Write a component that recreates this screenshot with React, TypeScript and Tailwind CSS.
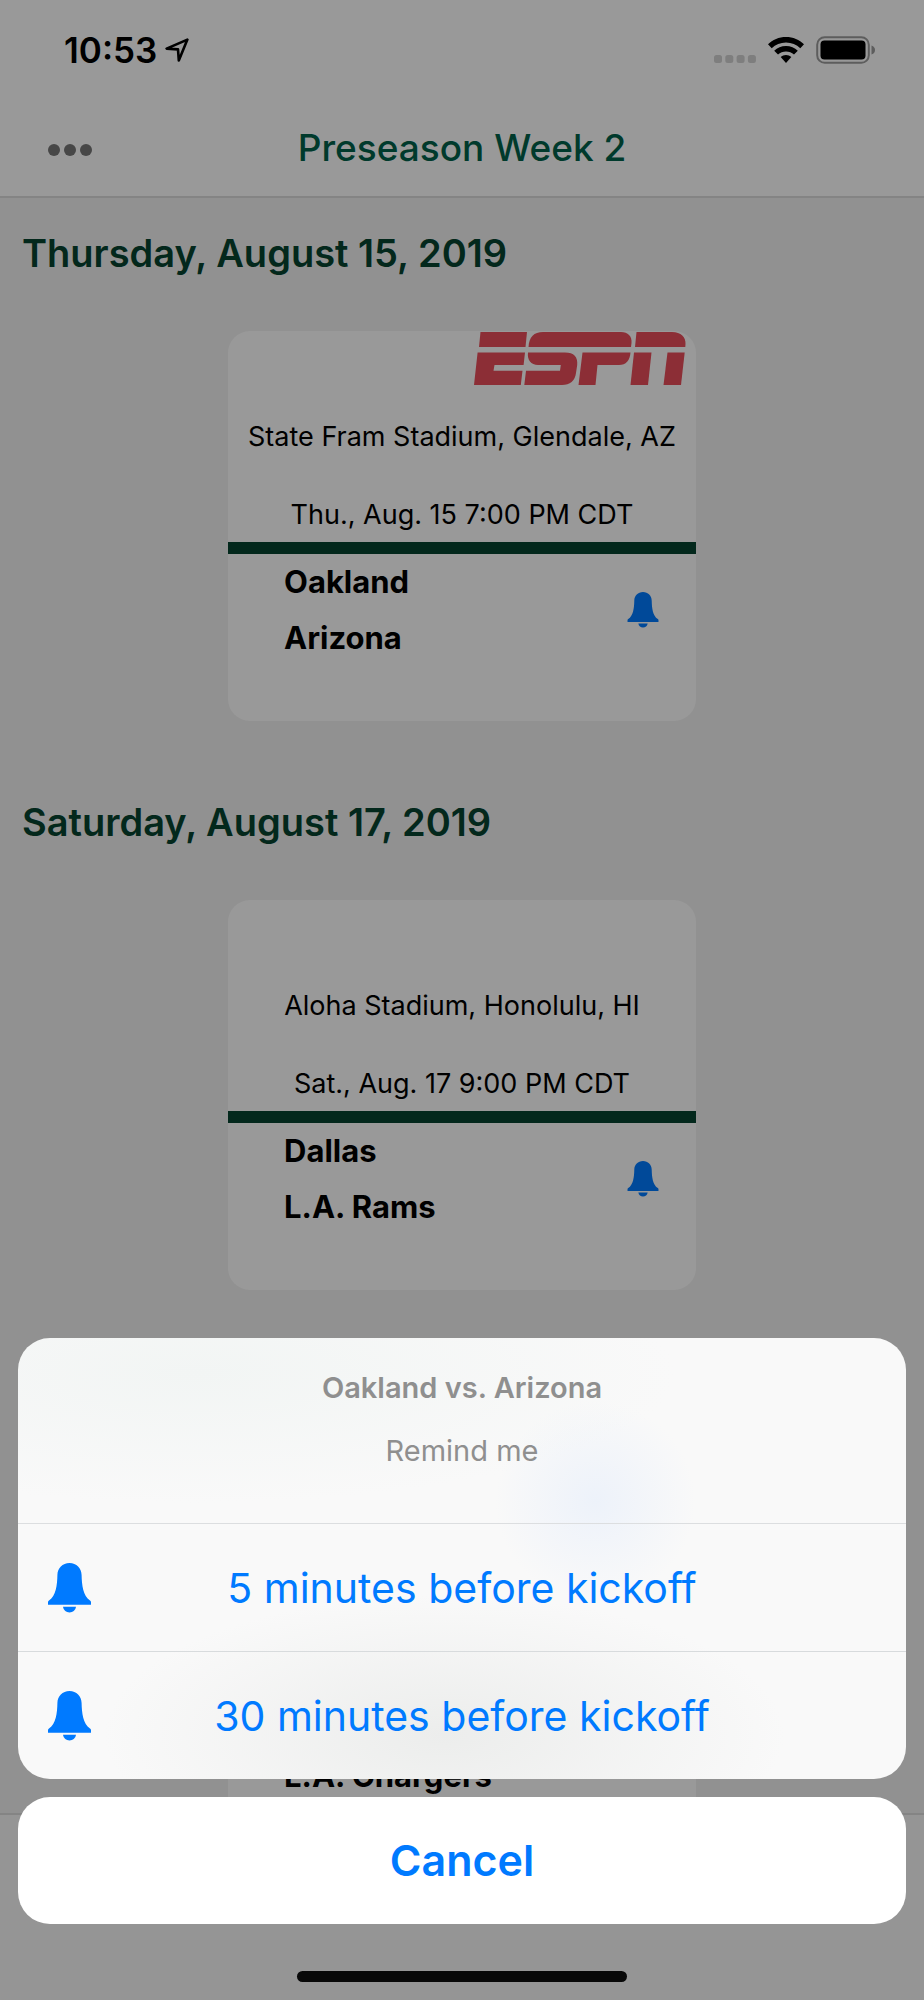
import { Fragment } from 'react';

type Game = {
  date?: string;
  stadium?: string;
  kickoff?: string;
  away?: string;
  home: string;
  network?: 'espn';
};

const games: Game[] = [
  {
    date: 'Thursday, August 15, 2019',
    stadium: 'State Fram Stadium, Glendale, AZ',
    kickoff: 'Thu., Aug. 15 7:00 PM CDT',
    away: 'Oakland',
    home: 'Arizona',
    network: 'espn'
  },
  {
    date: 'Saturday, August 17, 2019',
    stadium: 'Aloha Stadium, Honolulu, HI',
    kickoff: 'Sat., Aug. 17 9:00 PM CDT',
    away: 'Dallas',
    home: 'L.A. Rams'
  },
  { home: 'L.A. Chargers' }
];

const reminders = ['5 minutes before kickoff', '30 minutes before kickoff'];

function Bell({ className }: { className: string }) {
  return (
    <svg viewBox="0 0 43 50" className={className} fill="currentColor" aria-hidden="true">
      <path d="M21.5 0C28.5 0 33.5 5 33.6 12C33.8 22 35 33 42 37.4Q43 38 43 39V41.8H0V39Q0 38 1 37.4C8 33 9.2 22 9.4 12C9.5 5 14.5 0 21.5 0Z" />
      <path d="M15 43.8H28C27.4 47.4 24.8 49.4 21.5 49.4S15.6 47.4 15 43.8Z" />
    </svg>
  );
}

function EspnLogo() {
  return (
    <svg viewBox="0 0 212 53" className="h-[53px] w-[212px]" fill="#e94e5a" role="img" aria-label="ESPN">
      <path d="M6.500 0H53L51.500 15H5Z" />
      <path d="M3.600 20.500H51L49.600 33H20.500L19.500 38.800H48.500L46.800 53H0Z" />
      <path d="M69 0H147C154 0 158 4 157.500 11L157 15H54.500C55 5 60 0 69 0Z" />
      <path d="M54 20.500H91C100 20.500 104 25 103.200 33L102 41C101 49 96 53 88 53H50.300L52 38.800H86L86.800 33H64C57 33 53 28 54 20.500Z" />
      <path d="M108.500 20.500H156.500C156 28.500 152 33 145 33H123.500L121.500 53H104.500Z" />
      <path d="M162.500 0H198C207 0 212 5 211.500 12L211.300 15H161Z" />
      <path d="M160 20.500H177.500L174 53H156.500Z" />
      <path d="M193.500 20.500H210.700L207 53H189.500Z" />
    </svg>
  );
}

function StatusBar() {
  return (
    <div className="flex h-[100px] items-center justify-between pr-[48px] pl-[64px]">
      <div className="flex items-center gap-2">
        <span className="text-[35px] leading-10 font-semibold">10:53</span>
        <svg viewBox="0 0 24 24" className="h-6 w-6" fill="none" stroke="currentColor" strokeWidth="2.600" strokeLinejoin="round" aria-hidden="true">
          <path d="M22.400 1.600L1.600 10.600L13 11.400L13.800 22.400Z" />
        </svg>
      </div>
      <div className="flex items-center">
        <svg viewBox="0 0 42 8" className="mt-[18px] h-2 w-[42px]" fill="#d2d2d2" aria-hidden="true">
          <rect x="0" width="8" height="8" rx="2.500" />
          <rect x="11.300" width="8" height="8" rx="2.500" />
          <rect x="22.600" width="8" height="8" rx="2.500" />
          <rect x="33.900" width="8" height="8" rx="2.500" />
        </svg>
        <svg viewBox="0 0 36 26" className="ml-3 h-[26px] w-9" fill="currentColor" aria-hidden="true">
          <path d="M18 0C25 0 31.500 2.700 36 7.300L32.300 11.200C28.500 7.500 23.500 5.400 18 5.400S7.500 7.500 3.700 11.200L0 7.300C4.500 2.700 11 0 18 0Z" />
          <path d="M18 9C22.600 9 26.700 10.800 29.800 13.700L26 17.500C23.800 15.600 21 14.500 18 14.500S12.200 15.600 10 17.500L6.200 13.700C9.300 10.800 13.400 9 18 9Z" />
          <path d="M18 18C20 18 21.900 18.700 23.300 20L18 26L12.700 20C14.100 18.700 16 18 18 18Z" />
        </svg>
        <svg viewBox="0 0 60 28" className="ml-3 h-7 w-[60px]" aria-hidden="true">
          <rect x="1.200" y="1.200" width="51.600" height="25.600" rx="7.500" fill="none" stroke="#9c9c9c" strokeWidth="2" />
          <rect x="4.500" y="4.500" width="45" height="19" rx="4" />
          <path d="M55.500 9.500C58 10.500 59 12 59 14S58 17.500 55.500 18.500Z" fill="#9c9c9c" />
        </svg>
      </div>
    </div>
  );
}

function GameCard({ game }: { game: Game }) {
  return (
    <article className="mx-auto h-[390px] w-[468px] overflow-hidden rounded-[22px] bg-white">
      <div className="flex h-[211px] flex-col items-center text-[27px] leading-8 whitespace-nowrap">
        <div className="mb-[35px] flex h-[55px] w-full justify-end pt-px pr-[10px]">{game.network === 'espn' ? <EspnLogo /> : null}</div>
        <p className="h-8">{game.stadium}</p>
        <p className="mt-[46px] h-8">{game.kickoff}</p>
      </div>
      <div className="h-3 bg-[#06432f]" />
      <div className="flex items-center justify-between pr-[37px] pl-14">
        <div className="text-[31px] leading-[56px] font-bold">
          <p className="h-14">{game.away}</p>
          <p className="h-14">{game.home}</p>
        </div>
        <button type="button" aria-label={`Set a reminder for ${game.home}`} className="text-[#007aff]">
          <Bell className="h-9 w-8" />
        </button>
      </div>
    </article>
  );
}

function ReminderSheet() {
  return (
    <div className="absolute inset-0 flex flex-col justify-end bg-black/40 px-[18px] pb-[76px]">
      <div role="dialog" aria-label="Remind me" className="flex flex-col gap-[18px]">
        <div className="overflow-hidden rounded-[32px] bg-[#f9f9f9] bg-[radial-gradient(circle_at_65%_37%,#edf2fa_0,transparent_100px),radial-gradient(ellipse_340px_140px_at_48%_90%,#ecedec_0,transparent_100%),radial-gradient(ellipse_480px_130px_at_20%_8%,#f2f5f4_0,transparent_100%)]">
          <div className="flex h-[186px] flex-col items-center border-b border-[#dcdee0] pt-8 text-[29px] leading-9 text-[#8f8f8f]">
            <h2 className="font-semibold">Oakland vs. Arizona</h2>
            <p className="mt-[27px]">Remind me</p>
          </div>
          {reminders.map((label, i) => (
            <Fragment key={label}>
              {i > 0 ? <div className="h-px bg-[#d8dbdd]" /> : null}
              <button
                type="button"
                className="grid h-[127px] w-full grid-cols-[44px_1fr_44px] items-center px-[30px] text-[41px] leading-[50px] text-[#007aff] [font-variant-ligatures:none]"
              >
                <Bell className="h-[50px] w-[43px]" />
                <span>{label}</span>
              </button>
            </Fragment>
          ))}
        </div>
        <button type="button" className="h-[127px] rounded-[32px] bg-white text-[43px] font-semibold text-[#007aff]">
          Cancel
        </button>
      </div>
    </div>
  );
}

export default function App() {
  return (
    <div className="relative flex h-screen flex-col overflow-hidden bg-[#f2f2f2] font-['Inter','Liberation_Sans',sans-serif] text-black">
      <header className="h-[198px] shrink-0 border-b-2 border-[#dcdcdc] bg-white">
        <StatusBar />
        <div className="grid grid-cols-[1fr_auto_1fr] items-center px-12">
          <button type="button" aria-label="More" className="flex gap-1 pt-1">
            <span className="h-3 w-3 rounded-full bg-[#777]" />
            <span className="h-3 w-3 rounded-full bg-[#777]" />
            <span className="h-3 w-3 rounded-full bg-[#777]" />
          </button>
          <h1 className="text-[37px] leading-[96px] font-medium text-[#00624a]">Preseason Week 2</h1>
        </div>
      </header>

      <main className="min-h-0 flex-1 overflow-hidden">
        {games.map((game) => (
          <section key={game.home} className="h-[569px]">
            <h2 className="h-[133px] px-[22px] pt-8 text-[38px] leading-[46px] font-semibold text-[#06432f]">{game.date}</h2>
            <GameCard game={game} />
          </section>
        ))}
      </main>

      <footer className="h-[187px] shrink-0 border-t-2 border-[#dcdcdc] bg-[#f8f8f8]" />
      <ReminderSheet />
      <div className="absolute bottom-[18px] left-1/2 h-[11px] w-[330px] -translate-x-1/2 rounded-full bg-[#080808]" />
    </div>
  );
}
